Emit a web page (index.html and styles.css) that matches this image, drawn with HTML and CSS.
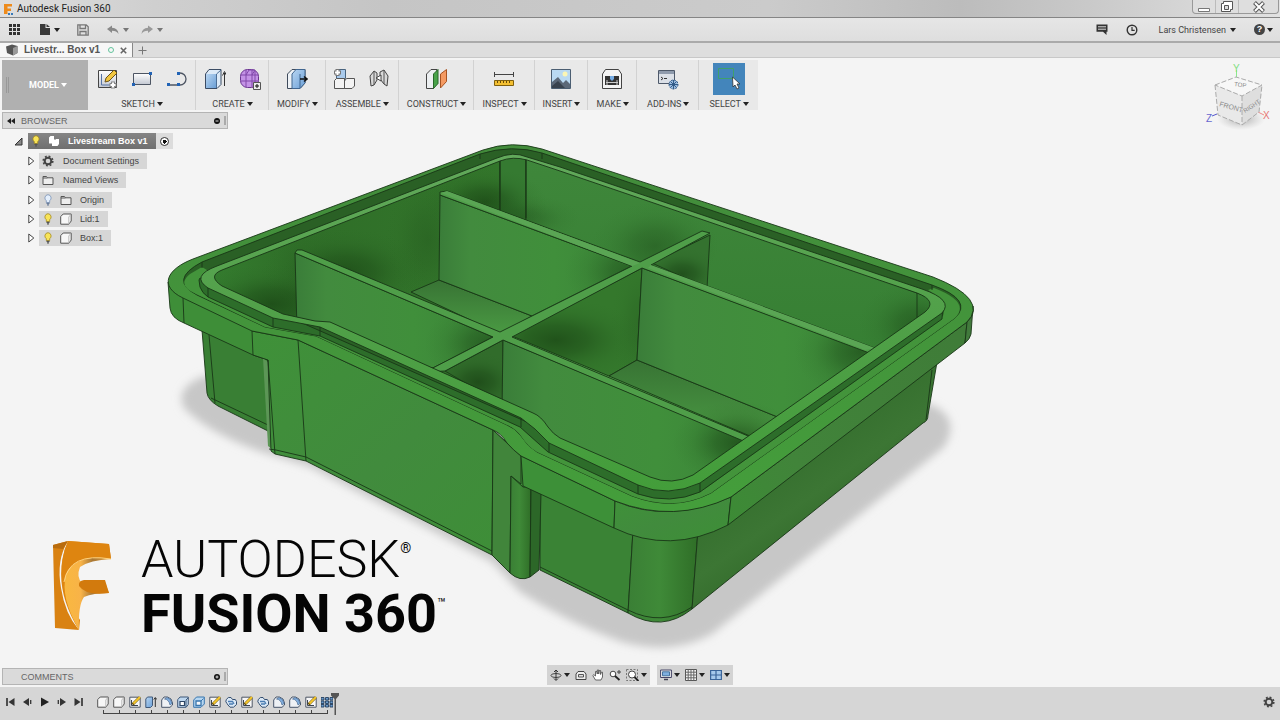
FILE: index.html
```html
<!DOCTYPE html>
<html lang="en">
<head>
<meta charset="utf-8">
<title>Autodesk Fusion 360</title>
<link rel="stylesheet" href="styles.css">
</head>
<body>
<svg class="defs" width="0" height="0" aria-hidden="true">
  <defs>
    <linearGradient id="blue" x1="0" y1="0" x2="1" y2="1"><stop offset="0" stop-color="#b9d6f2"/><stop offset="1" stop-color="#6b9fd6"/></linearGradient>
    <linearGradient id="paper" x1="0" y1="0" x2="0" y2="1"><stop offset="0" stop-color="#fff"/><stop offset="1" stop-color="#c3c8d2"/></linearGradient>
    <symbol id="bulb" viewBox="0 0 12 12"><path d="M6 .7a3.3 3.3 0 0 0-1.7 6V8.500h3.400V6.700A3.300 3.300 0 0 0 6 .7z" fill="#f8e458" stroke="#a58a1d" stroke-width=".8"/><path d="M4.500 9.300h3M5 10.900h2" stroke="#555" stroke-width="1.200"/></symbol>
    <symbol id="bulb-off" viewBox="0 0 12 12"><path d="M6 .7a3.300 3.300 0 0 0-1.700 6V8.500h3.400V6.700A3.300 3.300 0 0 0 6 .7z" fill="#e4effc" stroke="#7a93b8" stroke-width=".8"/><path d="M4.500 9.300h3M5 10.900h2" stroke="#6b7d99" stroke-width="1.200"/></symbol>
    <symbol id="folder" viewBox="0 0 12 12"><path d="M1 10.500v-8h3.500l1 1.300H11v6.700z" fill="#eee" stroke="#555"/><path d="M1 4h4.500" stroke="#555"/></symbol>
    <symbol id="body" viewBox="0 0 12 12"><path d="M.7 3.600 3.200 1h8v7l-2.400 3.200H.7z" fill="#f7f7f7" stroke="#555" stroke-linejoin="round"/><path d="M8.800 11V4l2-2.500" fill="none" stroke="#bbb"/></symbol>
    <symbol id="gear" viewBox="0 0 12 12"><circle cx="6" cy="6" r="3.300" fill="none" stroke="#444" stroke-width="2"/><circle cx="6" cy="6" r="4.800" fill="none" stroke="#444" stroke-width="1.600" stroke-dasharray="1.900 1.870"/></symbol>
    <symbol id="t-sketch" viewBox="0 0 12 12"><path d="M.8 1.200h10.400v10H.8z" fill="#f7f7f7" stroke="#4d5665"/><path d="M2.500 9.500V4M2.500 9.500H9" stroke="#3a4350"/><path d="M3.500 8.500 10.500 1.500" stroke="#6b5310" stroke-width="2.800"/><path d="M4.500 7.500 11 1" stroke="#f5c72c" stroke-width="2"/></symbol>
    <symbol id="t-extrude" viewBox="0 0 12 12"><path d="M.8 3 2.500 1h5v8.500l-2 2H.8z" fill="url(#blue)" stroke="#3f5878"/><path d="M10.300 11V2M8.800 3.500l1.500-2 1.500 2" fill="none" stroke="#333"/></symbol>
    <symbol id="t-fillet" viewBox="0 0 12 12"><path d="M.7 11.300V4L3 1h3.500q4.500 1 5 6v2l-2.500 2.300z" fill="#eef1f5" stroke="#48566a"/><path d="M3.500 3Q8 3.500 9 9l2-1.500Q10.500 2.500 6 1.500z" fill="#82afe0" stroke="#48688f" stroke-width=".7"/></symbol>
    <symbol id="t-shell" viewBox="0 0 12 12"><path d="M.7 3.700 3 1h8.300v7.500l-2.200 2.800H.7z" fill="#bed7ef" stroke="#3f5878"/><path d="M3 5.500h4.500v4H3z" fill="#fff" stroke="#2c4666" stroke-width="1.200"/><path d="M9 11V4l2-2" fill="none" stroke="#3f5878"/></symbol>
    <symbol id="t-comb" viewBox="0 0 12 12"><path d="M.7 4 3.500 1h7.800v7L8 11.300H.7z" fill="#b6d6f1" stroke="#3976ad"/><path d="M3 5h5v4.500H3z" fill="#f5f8fc" stroke="#3976ad" stroke-width="1.300"/><path d="M8 5l2.500-2.500" stroke="#3976ad"/></symbol>
    <symbol id="t-join" viewBox="0 0 12 12"><path d="M2 7.500Q0 6 1.300 3.500 3 .6 6 1.500l1.500 2h2.800l1.200 2v3L8.500 11.200H5L3 9z" fill="#dbe9f7" stroke="#344e70"/><path d="M3 5.500h4.500L9 8M4 8h4" fill="none" stroke="#4b7db2" stroke-width="1.300"/></symbol>
    <symbol id="t-pattern" viewBox="0 0 12 12"><path d="M0 1.500h3v2.500H0zM4.500 1.500h3v2.500h-3zM9 1.500h3v2.500H9zM0 5h3v2.500H0zM4.500 5h3v2.500h-3zM9 5h3v2.500H9zM0 8.500h3V11H0zM4.500 8.500h3V11h-3zM9 8.500h3V11H9z" fill="#6b9bcc" stroke="#25405f" stroke-width=".9"/></symbol>
  </defs>
</svg>

<header class="titlebar">
  <svg width="12" height="12" viewBox="0 0 12 12"><path d="M1 11V1h8v2.500H4.500v2H8V8H4.500v3z" fill="#ee8b1c"/><path d="M5 10h2v2H5zM8 10h2v2H8z" fill="#3979b8"/></svg>
  <h1 class="app-title">Autodesk Fusion 360</h1>
  <div class="window-buttons">
    <button aria-label="Minimize"><svg width="14" height="12"><path d="M1.500 7.500h11v3h-11z" fill="#fff" stroke="#777"/></svg></button>
    <button aria-label="Restore"><svg width="14" height="12"><path d="M3.500 .5h9v8h-2v2h-9v-8h2z" fill="#fff" stroke="#555"/><path d="M4.500 4.500h4v4h-4z" fill="#ddd" stroke="#555"/></svg></button>
    <button class="close" aria-label="Close"><svg width="14" height="12"><path d="m2.500 1.500 9 9m0-9-9 9" stroke="#555" stroke-width="4"/><path d="m3 2 8 8m0-8-8 8" stroke="#fff" stroke-width="2"/></svg></button>
  </div>
</header>

<nav class="quickbar" aria-label="Quick access">
  <button class="q-grid" aria-label="Show data panel"><svg width="12" height="12"><path d="M0 0h3v3H0zM4 0h3v3H4zM8 0h3v3H8zM0 4h3v3H0zM4 4h3v3H4zM8 4h3v3H8zM0 8h3v3H0zM4 8h3v3H4zM8 8h3v3H8z" fill="#333"/></svg></button>
  <button class="q-file" aria-label="File"><svg width="10" height="11"><path d="M0 0h5.500v4H10v7H0zM6.500 0 10 3H6.500z" fill="#3a3a3a"/></svg><i class="caret"></i></button>
  <button class="q-save" aria-label="Save"><svg width="12" height="12"><path d="M.8.800h8.400l2 2v8.400H.8zM3 1v3.500h5.500V1M3 11V7.500h6V11" fill="none" stroke="#777" stroke-width="1.300"/></svg></button>
  <button class="q-undo dim" aria-label="Undo"><svg width="12" height="10"><path d="M0 4 5 .5v2.300q6 .2 6.500 6.200Q9.500 5.700 5 5.800V8z" fill="#888"/></svg><i class="caret"></i></button>
  <button class="dim" aria-label="Redo"><svg width="12" height="10"><path d="M12 4 7 .5v2.300Q1 3 .5 9 2.500 5.700 7 5.800V8z" fill="#999"/></svg><i class="caret"></i></button>
  <div class="account">
    <button aria-label="Comments"><svg width="12" height="11"><path d="M.5.500h11v7.200h-1V11L7 7.700H.5z" fill="#333"/><path d="M2 2.800h8M2 5.200h8" stroke="#ddd"/></svg></button>
    <button aria-label="Job status"><svg width="12" height="12"><circle cx="6" cy="6" r="4.800" fill="none" stroke="#333" stroke-width="1.400"/><path d="M6 3v3.300h2.700" fill="none" stroke="#333" stroke-width="1.200"/></svg></button>
    <button class="user">Lars Christensen<i class="caret"></i></button>
    <button class="help" aria-label="Help"><span class="help-mark">?</span><i class="caret"></i></button>
  </div>
</nav>

<div class="tabbar">
  <div class="tab">
    <svg width="12" height="12"><path d="m0 2.500 6-2 5.500 1.500v7L7 11.500 1 9z" fill="#555"/><path d="m7 4 4.500-2v7L7 11.500z" fill="#999"/></svg>
    <span class="tab-name">Livestr... Box v1</span>
    <span class="tab-dot"></span>
    <button aria-label="Close tab"><svg width="7" height="7"><path d="m.8.800 5.400 5.400m0-5.400L.8 6.200" stroke="#666" stroke-width="1.600"/></svg></button>
  </div>
  <button class="new-tab" aria-label="New tab"><svg width="9" height="9"><path d="M4.500 0.500v8M.5 4.500h8" stroke="#777"/></svg></button>
</div>

<main class="viewport">
  <svg class="scene" viewBox="0 58 1280 629" preserveAspectRatio="xMidYMid slice" role="img" aria-label="Green storage box with divided compartments">
    <defs>
      <filter id="soft" x="-10%" y="-10%" width="120%" height="120%"><feGaussianBlur stdDeviation="4"/></filter>
      <radialGradient id="blob"><stop offset="0" stop-color="#153c10" stop-opacity=".62"/><stop offset=".35" stop-color="#184313" stop-opacity=".42"/><stop offset=".7" stop-color="#235a1d" stop-opacity=".14"/><stop offset="1" stop-color="#2c6b25" stop-opacity="0"/></radialGradient>
      <linearGradient id="face"><stop offset="0" stop-color="#3a7d39"/><stop offset=".16" stop-color="#428b3e"/><stop offset=".6" stop-color="#408f3b"/><stop offset="1" stop-color="#3b8438"/></linearGradient>
      <linearGradient id="front" x1="0" y1="0" x2="1" y2="1"><stop offset="0" stop-color="#3f9139"/><stop offset=".5" stop-color="#418b3d"/><stop offset="1" stop-color="#3d8f36"/></linearGradient>
      <linearGradient id="side" gradientUnits="userSpaceOnUse" x1="760" y1="480" x2="810" y2="550"><stop offset="0" stop-color="#36702f"/><stop offset=".5" stop-color="#3c7634"/><stop offset="1" stop-color="#336b2b"/></linearGradient>
      <linearGradient id="sideRim" gradientUnits="userSpaceOnUse" x1="700" y1="520" x2="960" y2="340"><stop offset="0" stop-color="#3b8d34"/><stop offset=".35" stop-color="#41843a"/><stop offset="1" stop-color="#3f7c38"/></linearGradient>
      <linearGradient id="pillar"><stop offset="0" stop-color="#3a7f35"/><stop offset=".45" stop-color="#3f8a38"/><stop offset="1" stop-color="#2f6e27"/></linearGradient>
      <linearGradient id="topface" x1="0" y1="0" x2="0" y2="1"><stop offset="0" stop-color="#428b3b"/><stop offset="1" stop-color="#449e3b"/></linearGradient>
      <linearGradient id="lip" x1="0" y1="0" x2="0" y2="1"><stop offset="0" stop-color="#62a95b"/><stop offset=".5" stop-color="#50a048"/><stop offset="1" stop-color="#439d3a"/></linearGradient>
      <linearGradient id="leftwall" x1="0" y1="0" x2="1" y2="0"><stop offset="0" stop-color="#357f30"/><stop offset=".35" stop-color="#2f6e28"/><stop offset="1" stop-color="#33762b"/></linearGradient>
      <linearGradient id="backwall" x1="0" y1="0" x2="0" y2="1"><stop offset="0" stop-color="#3f873b"/><stop offset="1" stop-color="#367f33"/></linearGradient>
      <linearGradient id="floor" x1="0" y1="0" x2="0" y2="1"><stop offset="0" stop-color="#387334"/><stop offset="1" stop-color="#4a9a43"/></linearGradient>
      <linearGradient id="logoA" x1="0" y1="0" x2="1" y2="1"><stop offset="0" stop-color="#e79520"/><stop offset="1" stop-color="#c96d08"/></linearGradient>
      <clipPath id="inside"><path d="M222 286Q207 276 222 270L500 161Q513 156 527 160L560 171 917 293Q938 301 925 312L693 475Q672 486 650 477L560 438Q553 434 548 427 541 416 533 413L330 322 315 321 283 314z"/></clipPath>
      <clipPath id="cA"><path d="M440 195 632 266 532 316 439 280z"/></clipPath>
      <clipPath id="cB"><path d="M295 253 493 337 433 368 297 315z"/></clipPath>
      <clipPath id="cC"><path d="M642 268 880 356 785 420 637 360z"/></clipPath>
      <clipPath id="cD"><path d="M652 263 710 235 707 288z"/></clipPath>
      <clipPath id="cE"><path d="M512 336 642 268 637 360 609 376z"/></clipPath>
    </defs>

    <path d="M204 376Q174 388 184 408 210 434 262 452L310 467 492 562 520 592Q570 624 622 642 672 656 712 634L944 447Q962 418 930 404z" fill="#c7c7c7" filter="url(#soft)"/>

    <g stroke="#183716" stroke-width=".9" stroke-linejoin="round">
      <path d="M202 330 207 393Q208 400 218 406L268 431V340z" fill="#397f34"/>
      <path d="M209 335 215 403M211 398l57 27" fill="none"/>
      <path d="M540 485V570L628 613 633 530z" fill="#3a8335"/>
      <path d="M540 567 628 610" fill="none"/>
      <path d="M633 530 628 613Q662 633 692 609L698 530z" fill="url(#pillar)"/>
      <path d="M628 610Q662 627 692 607" fill="none"/>
      <path d="M698 530 692 609 923 423Q928 421 928 415L937 362z" fill="url(#side)"/>
      <path d="M932 370 926 420" fill="none"/>
      <path d="M168 282 170 308Q171 318 184 323L253 355 268 360 330 350 298 330 183 290z" fill="#3e8e38"/>
      <path d="M263 358 268 362 273 450 268 446z" fill="#5c9656" stroke="none"/>
      <path d="M252 331 253 355 268 360 271 451 275 454 306 461 492 555 511 573 521 578 531 576V490L521 456 493 430 298 340z" fill="url(#front)"/>
      <path d="M268 360 275 454M269 449l7 1 30 7 186 94 18 20 10 4 11-3M298 340 306 461M493 430 492 555" fill="none"/>
      <path d="M493 430 521 456V484L511 476 510 573 492 555z" fill="#41853b"/>
      <path d="M511 476 523 487H531L530 577Q520 582 510 573z" fill="url(#pillar)"/>
      <path d="M531 489 541 494 539 570 530 577z" fill="#2c6728"/>
      <path d="M521 456 615 501 614 528 523 486z" fill="#3d9038"/>
      <path d="M615 501Q668 524 731 497L728 525Q670 555 614 528z" fill="url(#front)"/>
      <path d="M731 497 967 322 965 343 728 525z" fill="url(#sideRim)"/>
      <path d="M967 322Q975 315 973 306L971 334Q970 339 965 343z" fill="#417a3c"/>
      <path d="M183 298 184 323" fill="none"/>

      <path d="M183 298C158 286 167 269 193 259L483 150Q512 140 542 149L933 277Q989 299 967 322L731 497Q674 524 615 501L521 456Q513 450 507 443 501 433 493 430L298 340 252 331z" fill="url(#topface)"/>
      <path d="M197 295Q168 280 202 262L480 154Q512 144 542 153L932 285Q974 300 955 318L711 493Q674 512 632 496L537 452Q528 447 521 436 515 428 507 425L316 336 265 327z" fill="#2a6025"/>
      <path d="M196 294Q176 285 190 274L202 267 215 275 205 292 270 322 320 332 520 424 548 449 640 492Q674 502 706 488L943 316Q948 302 928 290L934 288Q971 302 955 318L711 493Q674 512 632 496L537 452Q528 447 521 436 515 428 507 425L316 336 265 327z" fill="#43943b" stroke="none"/>
      <path d="M480 154v5M542 153v6M202 262v6M932 285v5" fill="none"/>
      <path d="M199 280 200 287Q202 293 208 297L273 327 320 336 520 427 548 452 638 494Q670 505 700 492L942 319 943 304 670 485 200 278z" fill="#2d6d2a"/>
      <path d="M208 288Q190 276 217 266L497 158Q513 151 527 157L560 167 922 289Q954 300 942 313L700 483Q668 498 638 485L549 443 535 429 521 418 320 327 273 318z" fill="url(#lip)"/>
      <path d="M208 288v9M273 318v9M320 327v9M521 418v9M549 443v9M638 485v9M700 483v9" fill="none"/>
    </g>

    <g clip-path="url(#inside)" stroke="#183716" stroke-width=".9" stroke-linejoin="round">
      <path d="M190 280 500 155V420H190z" fill="url(#leftwall)"/>
      <path d="M500 150H526V330H500z" fill="#357a31"/>
      <path d="M526 150 950 305V350L860 360 526 290z" fill="url(#backwall)"/>
      <g stroke="none">
        <ellipse cx="485" cy="202" rx="62" ry="34" fill="url(#blob)"/>
        <ellipse cx="520" cy="218" rx="60" ry="24" fill="url(#blob)" opacity=".6"/>
        <ellipse cx="345" cy="272" rx="84" ry="44" fill="url(#blob)" opacity=".9"/>
        <ellipse cx="428" cy="240" rx="44" ry="70" fill="url(#blob)" opacity=".35"/>
        <ellipse cx="272" cy="304" rx="84" ry="40" fill="url(#blob)"/>
        <ellipse cx="655" cy="246" rx="64" ry="44" fill="url(#blob)" opacity=".6"/>
        <ellipse cx="918" cy="325" rx="60" ry="44" fill="url(#blob)" opacity=".75"/>
      </g>
      <path d="M500 155V210M526 155V218M917 292V325" fill="none"/>

      <path d="M411 292 439 280 532 316 500 334z" fill="url(#floor)"/>
      <path d="M440 195 632 266 532 316 439 280z" fill="url(#face)"/>
      <g clip-path="url(#cA)" stroke="none"><ellipse cx="636" cy="272" rx="72" ry="44" fill="url(#blob)" opacity=".85"/></g>

      <path d="M652 263 710 235 707 288z" fill="#34722f"/>
      <g clip-path="url(#cD)" stroke="none"><ellipse cx="682" cy="274" rx="40" ry="26" fill="url(#blob)"/></g>
      <path d="M512 336 642 268 637 360 609 376z" fill="#34782c"/>
      <g clip-path="url(#cE)" stroke="none"><ellipse cx="556" cy="340" rx="90" ry="42" fill="url(#blob)"/><ellipse cx="640" cy="325" rx="30" ry="70" fill="url(#blob)" opacity=".3"/></g>
      <path d="M609 376 637 360 785 420 757 439z" fill="url(#floor)"/>
      <path d="M642 268 880 356 785 420 637 360z" fill="url(#face)"/>
      <g clip-path="url(#cC)" stroke="none"><ellipse cx="860" cy="352" rx="66" ry="46" fill="url(#blob)" opacity=".85"/></g>

      <path d="M295 253 493 337 433 368 360 360 297 330z" fill="url(#face)"/>
      <g clip-path="url(#cB)" stroke="none"><ellipse cx="490" cy="344" rx="66" ry="42" fill="url(#blob)" opacity=".85"/></g>
      <path d="M445 371 503 340V405z" fill="#316c2b"/>
      <ellipse cx="478" cy="382" rx="44" ry="30" fill="url(#blob)" stroke="none"/>
      <path d="M503 340 760 447 693 490H600L502 410z" fill="url(#face)"/>
      <ellipse cx="738" cy="443" rx="66" ry="42" fill="url(#blob)" stroke="none"/>

      <path d="M440 195 440 192 447 191 640 262 702 231 710 233 651 265 880 350 880 357 642 268 512 337 760 441 760 448 503 340 445 371 425 372 493 337 295 253 297 250 302 250 500 332 632 266z" fill="#4f9e49"/>
      <path d="M441 193 447 191 640 263 632 266zM651 265 875 348 865 350 648 268z" fill="#5aa554" stroke="none"/>
    </g>
    <path d="M222 286Q207 276 222 270L500 161Q513 156 527 160L560 171 917 293Q938 301 925 312L693 475Q672 486 650 477L560 438Q553 434 548 427 541 416 533 413L330 322 315 321 283 314z" fill="none" stroke="#183716" stroke-width=".9"/>
  </svg>

  <div class="overlay">
    <div class="toolbar" role="toolbar" aria-label="Model tools">
      <button class="workspace"><span class="grip"></span>MODEL<i class="caret"></i></button>
      <section class="group">
        <div class="icons">
          <button aria-label="Create sketch"><svg width="22" height="22"><path d="M2.500 2.500h18v17h-18z" fill="url(#paper)" stroke="#444"/><path d="M5.500 6v11h9" fill="none" stroke="#5674a6"/><path d="m9 14 1-4 8-8 3 3-8 8z" fill="#f2c741" stroke="#6e5518"/><path d="M17 13.500v7M13.500 17h7" stroke="#888" stroke-width="4"/><path d="M17 14.500v5M14.500 17h5" stroke="#fff" stroke-width="2"/></svg></button>
          <button aria-label="Rectangle"><svg width="22" height="22"><path d="M2.500 5.500h17v11h-17z" fill="url(#paper)" stroke="#4d5563"/><path d="M1 15h3v3H1zM18 4h3v3h-3z" fill="#2263b5"/></svg></button>
          <button aria-label="Line"><svg width="22" height="22"><path d="M2 17h12a6 6 0 0 0 0-12h-1" fill="none" stroke="#4d5563" stroke-width="1.300"/><path d="M1 15h3v3H1zM11 15h3v3h-3zM11 4h3v3h-3z" fill="#2263b5"/></svg></button>
        </div>
        <button class="menu">SKETCH<i class="caret"></i></button>
      </section>
      <section class="group">
        <div class="icons">
          <button aria-label="Extrude"><svg width="22" height="22"><path d="M1.500 6 5 1.500h12v15L13 20.500H1.500z" fill="#dceaf8" stroke="#3b4c64"/><path d="M2 6h10v14H2z" fill="url(#blue)"/><path d="M12.500 20V6L17 2" fill="none" stroke="#4c6e95"/><path d="M20.500 18V5M18.500 7.500l2-4 2 4" fill="none" stroke="#333"/></svg></button>
          <button aria-label="Create form"><svg width="22" height="22"><rect x="1.500" y="1.500" width="18" height="18" rx="7" fill="#c493e6" stroke="#6b358f"/><path d="M7 2v17M13 2v17M2 7h17M2 13h17M7 7l3-5h6l-3 5M16 3v14" fill="none" stroke="#8148aa"/><path d="M14.500 14.500h7v7h-7z" fill="#eee" stroke="#555"/><path d="M18 16v4M16 18h4" stroke="#111"/></svg></button>
        </div>
        <button class="menu">CREATE<i class="caret"></i></button>
      </section>
      <section class="group">
        <div class="icons"><button aria-label="Press pull"><svg width="22" height="22"><path d="M1.500 6 6 1.500h13V15l-5 5.500H1.500z" fill="#eef2f6" stroke="#3f4b5c"/><path d="M6 6 10 1.500h9V15l-5 5.500H6z" fill="url(#blue)" stroke="#416690"/><path d="M14 6v14" stroke="#416690"/><path d="M14 11h6M18 8.500l3 2.500-3 2.500" fill="none" stroke="#111" stroke-width="1.500"/></svg></button></div>
        <button class="menu">MODIFY<i class="caret"></i></button>
      </section>
      <section class="group">
        <div class="icons">
          <button aria-label="New component"><svg width="22" height="22"><path d="M3.500 4 6 1.500h6.500v9h-9z" fill="#a9caec" stroke="#49647f"/><path d="M1.500 12.500 3.500 10.500h8v10h-10zM11.500 13l2-2.500h8V18L19 20.500h-7.500z" fill="#f4f4f4" stroke="#555"/><path d="M4.500 1v7M1 4.500h7" stroke="#777" stroke-width="4"/><path d="M4.500 2v5M2 4.500h5" stroke="#fff" stroke-width="2"/></svg></button>
          <button aria-label="Joint"><svg width="22" height="22"><path d="m2 8 4-5 3 2v7l-3 5-3 1zM20 8l-4-6-4 2v7l4 5 3 2z" fill="#d9d9d9" stroke="#444"/><path d="M6 3v14M16 2v14" fill="none" stroke="#555"/><path d="m8 10 5-3v6z" fill="#fff" stroke="#444"/></svg></button>
        </div>
        <button class="menu">ASSEMBLE<i class="caret"></i></button>
      </section>
      <section class="group">
        <div class="icons"><button aria-label="Offset plane"><svg width="24" height="22"><path d="M2.500 6 7 1.500h6L9.500 20.500h-7z" fill="#eceff1" stroke="#444"/><path d="M9.500 6 14 1.500v14l-4.500 5z" fill="#48a34a" stroke="#28682a"/><path d="m16.500 6 6-4.500v12l-6 6.500z" fill="#f49a62" stroke="#a65322"/></svg></button></div>
        <button class="menu">CONSTRUCT<i class="caret"></i></button>
      </section>
      <section class="group">
        <div class="icons"><button aria-label="Measure"><svg width="22" height="22"><path d="M1 6.500h20M1.500 4v5M20.500 4v5" stroke="#444"/><path d="M1.500 12.500h19v5h-19z" fill="#f3bf31" stroke="#80600e"/><path d="M4.500 13v2M7.500 13v2M10.500 13v2M13.500 13v2M16.500 13v2" stroke="#684b05"/></svg></button></div>
        <button class="menu">INSPECT<i class="caret"></i></button>
      </section>
      <section class="group">
        <div class="icons"><button aria-label="Insert image"><svg width="22" height="22"><path d="M1.500 1.500h19v19h-19z" fill="#b9d9f2" stroke="#4b5e72"/><circle cx="15" cy="6" r="2.500" fill="#fbf6b5"/><path d="m2 14 6-5 5 6 3-3 4 4v4H2z" fill="#5b6878"/><path d="m2 18 6-5 7 7H2z" fill="#38424e"/></svg></button></div>
        <button class="menu">INSERT<i class="caret"></i></button>
      </section>
      <section class="group">
        <div class="icons"><button aria-label="3D print"><svg width="22" height="22"><path d="m1.500 6 3-4.500h13l3 4.500v14.500h-19z" fill="#f4f4f4" stroke="#444"/><path d="M4 8h14v9H4z" fill="#333"/><path d="M9 8h4v3l-2 2-2-2z" fill="#76ace4"/><path d="M6 17v-5M16 17v-5M5 14.500h12" stroke="#ccc"/></svg></button></div>
        <button class="menu">MAKE<i class="caret"></i></button>
      </section>
      <section class="group roomy">
        <div class="icons"><button aria-label="Scripts and add-ins"><svg width="22" height="22"><path d="M1.500 2.500h16v13h-16z" fill="#dbe0e7" stroke="#4e596a"/><path d="M2 3h15v3H2z" fill="#8f9bad"/><path d="m4 9 2 1.500L4 12M7 10.500h3" fill="none" stroke="#333"/><circle cx="16.500" cy="16.500" r="4.500" fill="#9cbce0" stroke="#325b88" stroke-dasharray="2 1"/><path d="M16.500 12v9M12 16.500h9M13.500 13.500l6 6M19.500 13.500l-6 6" stroke="#325b88"/></svg></button></div>
        <button class="menu">ADD-INS<i class="caret"></i></button>
      </section>
      <section class="group roomy">
        <div class="icons"><button class="active" aria-label="Select" aria-pressed="true"><svg width="32" height="32"><path d="M5.500 5.500h15v10h-15z" fill="none" stroke="#3fa06b"/><path d="m19.500 14 .5 10 2-2 2 4 2-1-2-4h3z" fill="#fff" stroke="#333" stroke-width=".8"/></svg></button></div>
        <button class="menu">SELECT<i class="caret"></i></button>
      </section>
    </div>

    <aside class="browser">
      <header class="panel-head"><svg width="8" height="6"><path d="M4 0v6L0 3zM8 0v6L4 3z" fill="#222"/></svg><h2>BROWSER</h2><button aria-label="Collapse browser"><svg width="6" height="6"><circle cx="3" cy="3" r="3" fill="#111"/><path d="M1.500 3h3" stroke="#ddd"/></svg></button><span class="edge"></span></header>
      <ul class="tree">
        <li class="root"><svg width="9" height="9"><path d="M8 1v7H1z" fill="#888" stroke="#333"/></svg><span class="node selected"><svg width="12" height="12"><use href="#bulb"/></svg><svg class="comp" width="12" height="12"><path d="M1 2.500 2.500 1H6v3l1 1 1-1h3v5l-1.500 2H4V8.500H1z" fill="#fff"/></svg>Livestream Box v1</span><label class="activate"><input type="radio" name="active" checked aria-label="Activate component"></label></li>
        <li><svg class="tri" width="7" height="10"><path d="M.8 1v8L5.800 5z" fill="#fff" stroke="#444"/></svg><span class="node"><svg width="12" height="12"><use href="#gear"/></svg>Document Settings</span></li>
        <li><svg class="tri" width="7" height="10"><path d="M.8 1v8L5.800 5z" fill="#fff" stroke="#444"/></svg><span class="node"><svg width="12" height="12"><use href="#folder"/></svg>Named Views</span></li>
        <li class="spaced"><svg class="tri" width="7" height="10"><path d="M.8 1v8L5.800 5z" fill="#fff" stroke="#444"/></svg><span class="node"><svg width="12" height="12"><use href="#bulb-off"/></svg><svg width="12" height="12"><use href="#folder"/></svg>Origin</span></li>
        <li><svg class="tri" width="7" height="10"><path d="M.8 1v8L5.800 5z" fill="#fff" stroke="#444"/></svg><span class="node"><svg width="12" height="12"><use href="#bulb"/></svg><svg width="12" height="12"><use href="#body"/></svg>Lid:1</span></li>
        <li><svg class="tri" width="7" height="10"><path d="M.8 1v8L5.800 5z" fill="#fff" stroke="#444"/></svg><span class="node"><svg width="12" height="12"><use href="#bulb"/></svg><svg width="12" height="12"><use href="#body"/></svg>Box:1</span></li>
      </ul>
    </aside>

    <div class="brand">
      <svg width="60" height="92" viewBox="0 0 60 92">
        <defs><linearGradient id="bowl" x1="0" y1="0" x2="1" y2="0"><stop offset="0" stop-color="#f9b840"/><stop offset=".35" stop-color="#f8b348"/><stop offset=".6" stop-color="#a87836"/><stop offset="1" stop-color="#e5a23b"/></linearGradient></defs>
        <path d="M1 5 16 1Q4 20 9 48 13 74 27 90L3 88z" fill="#d98212"/>
        <path d="m1 5 15-4-5 8L1 8z" fill="#b96c0e"/>
        <path d="M16 1 57 4 59 19Q25 13 12 37 7 20 16 1z" fill="url(#logoA)"/>
        <path d="M16 1Q-2 43 27 90L28 80Q2 41 21 24 33 14 59 19L57 4z" fill="#de8510"/>
        <path d="M59 19Q24 13 14 35 8 57 27 90 26 65 32 57 41 53 57 53L52 40Q39 42 30 43 24 37 28 27 38 20 59 19z" fill="url(#bowl)"/>
        <path d="M27 46Q26 41 32 40H53L57 53Q34 56 27 46z" fill="#d27a0d"/>
        <path d="M59 19Q17 12 12 42" fill="none" stroke="#ffd27c"/>
      </svg>
      <div class="wordmark"><p class="light">AUTODESK<sup>®</sup></p><p class="bold">FUSION 360<sup>™</sup></p></div>
    </div>

    <div class="bottom">
      <header class="panel-head comments"><h2>COMMENTS</h2><button aria-label="Expand comments"><svg width="6" height="6"><circle cx="3" cy="3" r="3" fill="#111"/><path d="M1.500 3h3M3 1.500v3" stroke="#ddd"/></svg></button><span class="edge"></span></header>
      <div class="navbars">
        <div class="navbar">
          <button aria-label="Orbit"><svg width="12" height="12"><ellipse cx="6" cy="6.500" rx="5" ry="2" fill="none" stroke="#444"/><path d="M6 1v10M4 3l2-2 2 2M4 9.500l2 2 2-2" fill="none" stroke="#333"/></svg><i class="caret"></i></button>
          <button aria-label="Look at"><svg width="12" height="12"><path d="M1 5 3 2.500h6L11 5v5.500H1z" fill="#eee" stroke="#444"/><path d="M3.500 5.500h5v2.500h-5z" fill="#ddd" stroke="#555"/></svg></button>
          <button aria-label="Pan"><svg width="12" height="12"><path d="M3.500 11 .8 6.500l1-.8L3.500 7V2.500h1.300L5.300 5V1h1.400v4l.6-3.500h1.300V5.500l.7-2.300h1.200V8l-1.500 3z" fill="#fff" stroke="#444" stroke-width=".8"/></svg></button>
          <button aria-label="Zoom"><svg width="12" height="12"><circle cx="4" cy="5" r="2.800" fill="#fff" stroke="#444"/><path d="m6 7 4.500 4" stroke="#222" stroke-width="1.800"/><path d="M8 3h4M10 1v4" stroke="#444"/></svg></button>
          <button aria-label="Fit"><svg width="13" height="12"><path d="M.5.500h11v11H.5z" fill="none" stroke="#777" stroke-dasharray="2 1.500"/><circle cx="6" cy="5.500" r="3.500" fill="#fff" stroke="#444"/><path d="m8.500 8 4 4" stroke="#222" stroke-width="1.800"/></svg><i class="caret"></i></button>
        </div>
        <div class="navbar">
          <button aria-label="Display settings"><svg width="12" height="12"><path d="M.6 1h10.800v7.500H.6z" fill="#eee" stroke="#446"/><path d="M2.500 2.800h7v4h-7z" fill="#7fafe0" stroke="#47729f"/><path d="M4 10.500h4" stroke="#445" stroke-width="1.500"/></svg><i class="caret"></i></button>
          <button aria-label="Grid"><svg width="12" height="12"><path d="M.5.500h11v11H.5z" fill="#f5f5f5" stroke="#555"/><path d="M3.200.5v11M6 .5v11M8.800.5v11M.5 3.200h11M.5 6h11M.5 8.800h11" stroke="#666"/></svg><i class="caret"></i></button>
          <button aria-label="Viewports"><svg width="12" height="12"><path d="M.6 1.500h10.800v9H.6z" fill="#a6c9ec" stroke="#3b659a" stroke-width="1.200"/><path d="M6 1.500v9M.6 6h10.800" stroke="#3b659a" stroke-width="1.200"/></svg><i class="caret"></i></button>
        </div>
      </div>
    </div>
  </div>

  <svg class="viewcube" width="70" height="70" viewBox="1203 62 70 70" role="img" aria-label="View cube">
    <defs><radialGradient id="glow"><stop offset="0" stop-color="#777" stop-opacity=".6"/><stop offset="1" stop-color="#aaa" stop-opacity="0"/></radialGradient></defs>
    <ellipse cx="1241" cy="119" rx="24" ry="11" fill="url(#glow)"/>
    <path d="M1236.500 78V70" stroke="#8be88b"/><path d="m1217 114-5 2" stroke="#55c"/><path d="m1258 112 6 3" stroke="#e88"/>
    <path d="m1215 85 21-8 26 8-20 11z" fill="#f7f7f7"/><path d="m1215 85 27 11v29l-24-10z" fill="#e9e9e9"/><path d="m1262 85-20 11v29l17-13z" fill="#dedede"/>
    <path d="m1215 85 21-8 26 8-20 11zM1215 85l3 30 24 10 17-13 3-27M1242 96v29" fill="none" stroke="#aaa" stroke-dasharray="5 2"/>
    <g class="cube-text"><text x="1219" y="106" transform="rotate(16 1219 106)">FRONT</text><text x="1245" y="113" transform="rotate(-33 1245 113)">RIGHT</text><text x="1234" y="86" transform="rotate(7 1234 86)">TOP</text></g>
    <g class="axis"><text x="1233" y="72" fill="#83df83">Y</text><text x="1206" y="122" fill="#6767cf">Z</text><text x="1263" y="119" fill="#e67575">X</text></g>
  </svg>
</main>

<footer class="timeline">
  <div class="transport">
    <button aria-label="Go to start"><svg width="9" height="10"><path d="M1 1v8" stroke="#222" stroke-width="1.500"/><path d="M8.500 1v8L2.500 5z" fill="#333"/></svg></button>
    <button aria-label="Step back"><svg width="9" height="10"><path d="M6 1v8L0 5z" fill="#333"/><path d="M7.700 3v4" stroke="#333" stroke-width="1.300"/></svg></button>
    <button aria-label="Play"><svg width="9" height="10"><path d="M1 .5v9L9 5z" fill="#222"/></svg></button>
    <button aria-label="Step forward"><svg width="9" height="10"><path d="M3 1v8l6-4z" fill="#333"/><path d="M1.300 3v4" stroke="#333" stroke-width="1.300"/></svg></button>
    <button aria-label="Go to end"><svg width="9" height="10"><path d="M8 1v8" stroke="#222" stroke-width="1.500"/><path d="M.5 1v8l6-4z" fill="#333"/></svg></button>
  </div>
  <ol class="features">
    <li><svg><use href="#body"/></svg></li><li><svg><use href="#body"/></svg></li><li><svg><use href="#t-sketch"/></svg></li><li><svg><use href="#t-extrude"/></svg></li><li><svg><use href="#t-fillet"/></svg></li><li><svg><use href="#t-shell"/></svg></li><li><svg><use href="#t-comb"/></svg></li><li><svg><use href="#t-sketch"/></svg></li><li><svg><use href="#t-join"/></svg></li><li><svg><use href="#t-sketch"/></svg></li><li><svg><use href="#t-join"/></svg></li><li><svg><use href="#t-fillet"/></svg></li><li><svg><use href="#t-fillet"/></svg></li><li><svg><use href="#t-sketch"/></svg></li><li><svg><use href="#t-pattern"/></svg></li>
  </ol>
  <svg class="marker" width="8" height="22"><path d="M0 0h8v2.500L5 6v16H3.500V6L0 2.500z" fill="#555"/></svg>
  <button class="settings" aria-label="Timeline settings"><svg width="12" height="12"><use href="#gear"/></svg></button>
</footer>
</body>
</html>
```
FILE: styles.css
```css
* { box-sizing: border-box; }
body {
  margin: 0;
  height: 100vh;
  display: flex;
  flex-direction: column;
  overflow: hidden;
  font: 9px/12px "Liberation Sans", Arial, sans-serif;
  color: #555;
  background: #f4f4f4;
}
.defs { position: absolute; }
svg { display: block; flex: none; }
button {
  display: flex;
  align-items: center;
  justify-content: center;
  margin: 0;
  padding: 0;
  border: 0;
  background: none;
  color: inherit;
  font: inherit;
}
h1, h2, p, ul, ol { margin: 0; padding: 0; font: inherit; list-style: none; }
.caret {
  width: 0;
  height: 0;
  margin-left: 2px;
  border: 3px solid transparent;
  border-top: 4px solid #222;
  border-bottom: 0;
}

.titlebar {
  display: flex;
  align-items: flex-start;
  height: 18px;
  padding-left: 3px;
  border-bottom: 1px solid #858585;
  background: linear-gradient(90deg, #dedede 0, #cfcfcf 12%, #c5c5c5 30%, #cbcbcb 60%, #bcbcbc 75%, #c9c9c9 85%, #e2e2e2 100%);
}
.titlebar > svg { margin-top: 3px; }
.app-title { margin: 3px 0 0 2px; font: 10px/12px Roboto, sans-serif; color: #222; }
.window-buttons {
  display: flex;
  height: 14px;
  margin: 0 1px 0 auto;
  border: 1px solid #999;
  border-top: 0;
  border-radius: 0 0 4px 4px;
  background: #dedede;
}
.window-buttons button { width: 23px; border-right: 1px solid #bbb; }
.window-buttons .close { width: 39px; border-right: 0; }

.quickbar {
  display: flex;
  align-items: center;
  height: 25px;
  padding: 0 7px 0 9px;
  border-bottom: 2px solid #aaa;
  background: linear-gradient(#e6e6e6, #dedede);
}
.q-file { margin-left: 19px; }
.q-file .caret { margin-left: 4px; }
.q-save { margin-left: 17px; }
.q-undo { margin: 0 12px 0 18px; }
.dim .caret { margin-left: 4px; border-top-color: #777; }
.account { display: flex; align-items: center; margin-left: auto; font: 9px/12px Roboto, sans-serif; color: #444; }
.account button + button { margin-left: 18px; }
.account .user { margin-left: 21px; }
.account .user .caret { margin-left: 4px; }
.account .help-mark { width: 11px; height: 11px; border-radius: 50%; background: #444; color: #fff; font: bold 9px/11px "Liberation Sans", sans-serif; }

.tabbar { display: flex; align-items: center; height: 15px; border-bottom: 1px solid #c8c8c8; background: #dedede; }
.tab {
  display: flex;
  align-items: center;
  height: 14px;
  padding: 0 5px 0 6px;
  border-right: 1px solid #888;
  background: #f7f7f7;
}
.tab-name { margin-left: 6px; font-size: 10px; font-weight: bold; }
.tab-dot { width: 6px; height: 6px; margin: 0 6px 0 8px; border: 1px solid #63c39c; border-radius: 50%; }
.new-tab { margin-left: 5px; }

.viewport { position: relative; flex: 1; min-height: 0; display: grid; grid-template: minmax(0, 1fr) / minmax(0, 1fr); background: #f4f4f4; }
.scene, .overlay { grid-area: 1 / 1; }
.scene { width: 100%; height: 100%; }
.overlay { z-index: 1; display: flex; flex-direction: column; padding: 2px; }

.toolbar { display: flex; align-self: flex-start; height: 50px; background: #e9e9e9; font: 9px/12px Roboto, sans-serif; }
.workspace { position: relative; width: 86px; background: #b0b0b0; color: #fff; font-weight: bold; padding-left: 6px; }
.workspace .caret { border-top-color: #fff; }
.grip { position: absolute; left: 4px; top: 17px; width: 3px; height: 16px; border: 1px solid #999; border-width: 0 1px; }
.group { display: flex; flex-direction: column; justify-content: space-between; padding: 3px 1px 0; border-right: 1px solid #d2d2d2; }
.group:last-child { border-right: 0; }
.icons { display: flex; justify-content: center; height: 32px; }
.icons button { width: 35px; }
.icons .active { width: 32px; background: #4385bb; }
.menu { padding: 0 6px 0 7px; color: #444; }
.roomy .menu { padding: 0 8px 0 9px; }

.panel-head {
  display: flex;
  align-items: center;
  width: 226px;
  height: 17px;
  padding: 0 1px 0 4px;
  border: 1px solid #b4b4b4;
  background: #dadada;
  color: #666;
}
.panel-head h2 { margin-left: 6px; }
.panel-head button { margin-left: auto; }
.edge { width: 2px; height: 9px; margin-left: 4px; border: 1px solid #aaa; border-width: 0 1px; }
.browser { margin-top: 2px; }
.tree { display: flex; flex-direction: column; gap: 3px; padding-top: 4px; }
.tree li { display: flex; align-items: center; height: 16px; padding-left: 26px; color: #444; }
.tree .root { margin-bottom: 1px; padding-left: 12px; }
.tree .spaced { margin-top: 1px; }
.tri { margin-right: 4px; }
.node { display: flex; align-items: center; gap: 6px; height: 16px; padding: 0 8px 0 3px; background: #d6d6d6; }
.node svg + svg { margin-right: 2px; }
.node svg:first-child:not(:has(+ svg)) { margin-right: 3px; }
.node.selected { margin-left: 5px; padding-left: 2px; background: linear-gradient(#858585, #6f6f6f); color: #fff; font-weight: bold; }
.activate { display: flex; align-items: center; justify-content: center; width: 17px; height: 16px; background: #dcdcdc; }
.activate input { appearance: none; width: 9px; height: 9px; margin: 0; border: 1px solid #333; border-radius: 50%; background: radial-gradient(#111 0 2px, #fff 2px); }

.brand { display: flex; align-items: flex-start; margin: auto 0 24px 50px; color: #050505; font-family: Roboto, sans-serif; font-size: 52px; line-height: 54px; }
.wordmark { margin: -7px 0 0 29px; }
.wordmark p { height: 54px; }
.light { font-weight: 300; }
.bold { font-weight: 700; font-size: 54px; }
.wordmark sup { font-size: 14px; line-height: 14px; font-weight: 400; vertical-align: 24px; }

.bottom { display: grid; grid-template-columns: 1fr auto 1fr; align-items: end; }
.comments h2 { margin-left: 14px; }
.navbars { display: flex; gap: 7px; }
.navbar { display: flex; align-items: center; gap: 5px; height: 20px; padding: 0 3px; background: #d3d3d3; }
.viewcube { position: absolute; z-index: 2; top: 4px; right: 7px; }
.cube-text { font-size: 7px; fill: #888; }
.cube-text text:nth-child(2) { font-size: 6px; }
.cube-text text:nth-child(3) { font-size: 6px; }
.axis { font-size: 10px; }

.timeline { display: flex; align-items: flex-start; height: 33px; padding: 4px 5px 0 6px; background: #d6d6d6; }
.transport { display: flex; gap: 8px; padding-top: 6px; }
.features { position: relative; display: flex; margin-left: 12px; }
.features li { width: 16px; height: 23px; padding: 5px 2px 0; background: linear-gradient(#444, #444) center bottom / 1px 4px no-repeat; }
.features svg { width: 12px; height: 12px; }
.features::after { content: ""; position: absolute; left: 8px; right: 8px; bottom: 0; height: 1px; background: #444; }
.marker { margin: 2px 0 0 -4px; }
.settings { margin: 5px 0 0 auto; }
```
